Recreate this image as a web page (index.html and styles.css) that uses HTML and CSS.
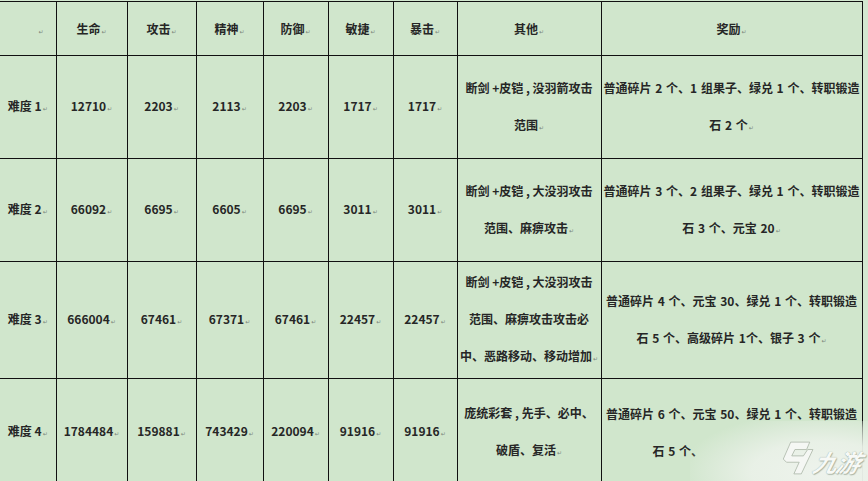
FILE: index.html
```html
<!DOCTYPE html>
<html lang="zh-CN">
<head>
<meta charset="utf-8">
<title>难度奖励表</title>
<link rel="stylesheet" href="styles.css">
</head>
<body>
<div class="page">
<table class="stats">
  <colgroup>
    <col class="c0"><col class="c1"><col class="c2"><col class="c3"><col class="c4"><col class="c5"><col class="c6"><col class="c7"><col class="c8">
  </colgroup>
  <tr class="head">
    <td class="first"><span class="blank"><span class="rm">↵</span></span></td>
    <td>生命<span class="rm">↵</span></td>
    <td>攻击<span class="rm">↵</span></td>
    <td>精神<span class="rm">↵</span></td>
    <td>防御<span class="rm">↵</span></td>
    <td>敏捷<span class="rm">↵</span></td>
    <td>暴击<span class="rm">↵</span></td>
    <td>其他<span class="rm">↵</span></td>
    <td>奖励<span class="rm">↵</span></td>
  </tr>
  <tr class="r1">
    <td class="first">难度 1<span class="rm">↵</span></td>
    <td>12710<span class="rm">↵</span></td>
    <td>2203<span class="rm">↵</span></td>
    <td>2113<span class="rm">↵</span></td>
    <td>2203<span class="rm">↵</span></td>
    <td>1717<span class="rm">↵</span></td>
    <td>1717<span class="rm">↵</span></td>
    <td class="txt">断剑 +皮铠 , 没羽箭攻击<br>范围<span class="rm">↵</span></td>
    <td class="txt wide">普通碎片 2 个、1 组果子、绿兑 1 个、转职锻造<br>石 2 个<span class="rm">↵</span></td>
  </tr>
  <tr class="r2">
    <td class="first">难度 2<span class="rm">↵</span></td>
    <td>66092<span class="rm">↵</span></td>
    <td>6695<span class="rm">↵</span></td>
    <td>6605<span class="rm">↵</span></td>
    <td>6695<span class="rm">↵</span></td>
    <td>3011<span class="rm">↵</span></td>
    <td>3011<span class="rm">↵</span></td>
    <td class="txt">断剑 +皮铠 , 大没羽攻击<br>范围、麻痹攻击<span class="rm">↵</span></td>
    <td class="txt wide">普通碎片 3 个、2 组果子、绿兑 1 个、转职锻造<br>石 3 个、元宝 20<span class="rm">↵</span></td>
  </tr>
  <tr class="r3">
    <td class="first">难度 3<span class="rm">↵</span></td>
    <td>666004<span class="rm">↵</span></td>
    <td>67461<span class="rm">↵</span></td>
    <td>67371<span class="rm">↵</span></td>
    <td>67461<span class="rm">↵</span></td>
    <td>22457<span class="rm">↵</span></td>
    <td>22457<span class="rm">↵</span></td>
    <td class="txt">断剑 +皮铠 , 大没羽攻击<br>范围、麻痹攻击攻击必<br>中、恶路移动、移动增加<span class="rm">↵</span></td>
    <td class="txt wide">普通碎片 4 个、元宝 30、绿兑 1 个、转职锻造<br>石 5 个、高级碎片 1个、银子 3 个<span class="rm">↵</span></td>
  </tr>
  <tr class="r4">
    <td class="first">难度 4<span class="rm">↵</span></td>
    <td>1784484<span class="rm">↵</span></td>
    <td>159881<span class="rm">↵</span></td>
    <td>743429<span class="rm">↵</span></td>
    <td>220094<span class="rm">↵</span></td>
    <td>91916<span class="rm">↵</span></td>
    <td>91916<span class="rm">↵</span></td>
    <td class="txt">庞统彩套 , 先手、必中、<br>破盾、复活<span class="rm">↵</span></td>
    <td class="txt wide">普通碎片 6 个、元宝 50、绿兑 1 个、转职锻造<br><span class="tail">石 5 个、</span></td>
  </tr>
</table>
<div class="watermark">
  <svg class="logo" viewBox="0 0 34 34" width="36" height="36" aria-hidden="true">
    <path d="M12 2 L30 2 L27 9 L16 9 L13 15 L24 15 L28 9 L33 9 L22 32 L15 32 L20 21 L8 21 L5 18 Z" fill="#f5f7f4" stroke="#aeb9ab" stroke-width="0.8"/>
  </svg>
  <span class="brand">九游</span>
</div>
</div>
</body>
</html>
```

FILE: styles.css
```css
html, body {
  margin: 0;
  padding: 0;
  background: #d3e8d0;
}

.page {
  position: relative;
  width: 868px;
  height: 481px;
  overflow: hidden;
  padding-top: 1px;
  box-sizing: border-box;
}

.stats {
  border-collapse: collapse;
  table-layout: fixed;
  width: 862px;
  background: #d0e6cc;
  font-family: "Noto Sans CJK SC", "Noto Sans", sans-serif;
  font-weight: 700;
  font-size: 12px;
  color: #262626;
}

.c0 { width: 56px; }
.c1 { width: 71px; }
.c2 { width: 69px; }
.c3 { width: 67px; }
.c4 { width: 65px; }
.c5 { width: 65px; }
.c6 { width: 64px; }
.c7 { width: 144px; }
.c8 { width: 261px; }

.stats td {
  border: 1px solid #111;
  text-align: center;
  vertical-align: middle;
  padding: 0 2px;
  line-height: 18px;
  white-space: nowrap;
  overflow: hidden;
}

.stats td.first {
  border-left: none;
}

.stats td.txt {
  line-height: 37px;
  padding: 0 1px;
}

.stats td.wide {
  word-spacing: 1px;
}

.head td { height: 50px; padding-top: 3px; }
.r1 td { height: 102px; }
.r2 td { height: 102px; }
.r3 td { height: 116px; }
.r4 td { height: 106px; }

.tail {
  display: inline-block;
  width: 158px;
  text-align: left;
}

.blank {
  display: block;
  text-align: right;
  padding-right: 10px;
}

.rm {
  font-family: "DejaVu Sans", sans-serif;
  font-weight: 400;
  font-size: 6px;
  color: #7d877d;
  margin-left: 1px;
}

.watermark {
  position: absolute;
  left: 690px;
  top: 421px;
  width: 190px;
  height: 64px;
  background: radial-gradient(ellipse 75% 95% at 70% 80%, rgba(238,243,237,0.98) 0%, rgba(234,241,232,0.94) 50%, rgba(226,237,224,0.6) 78%, rgba(220,235,218,0) 100%);
  display: flex;
  align-items: center;
  padding-left: 88px;
  box-sizing: border-box;
}

.logo {
  flex: none;
  margin-top: 10px;
}

.brand {
  font-family: "Noto Sans CJK SC", sans-serif;
  font-weight: 700;
  font-style: italic;
  font-size: 24px;
  color: #f7f9f6;
  letter-spacing: -1px;
  text-shadow: 0 0 1px #93a090, 1px 1px 1px #adb8aa;
  transform: skewX(-14deg);
  margin-top: 16px;
}
```
